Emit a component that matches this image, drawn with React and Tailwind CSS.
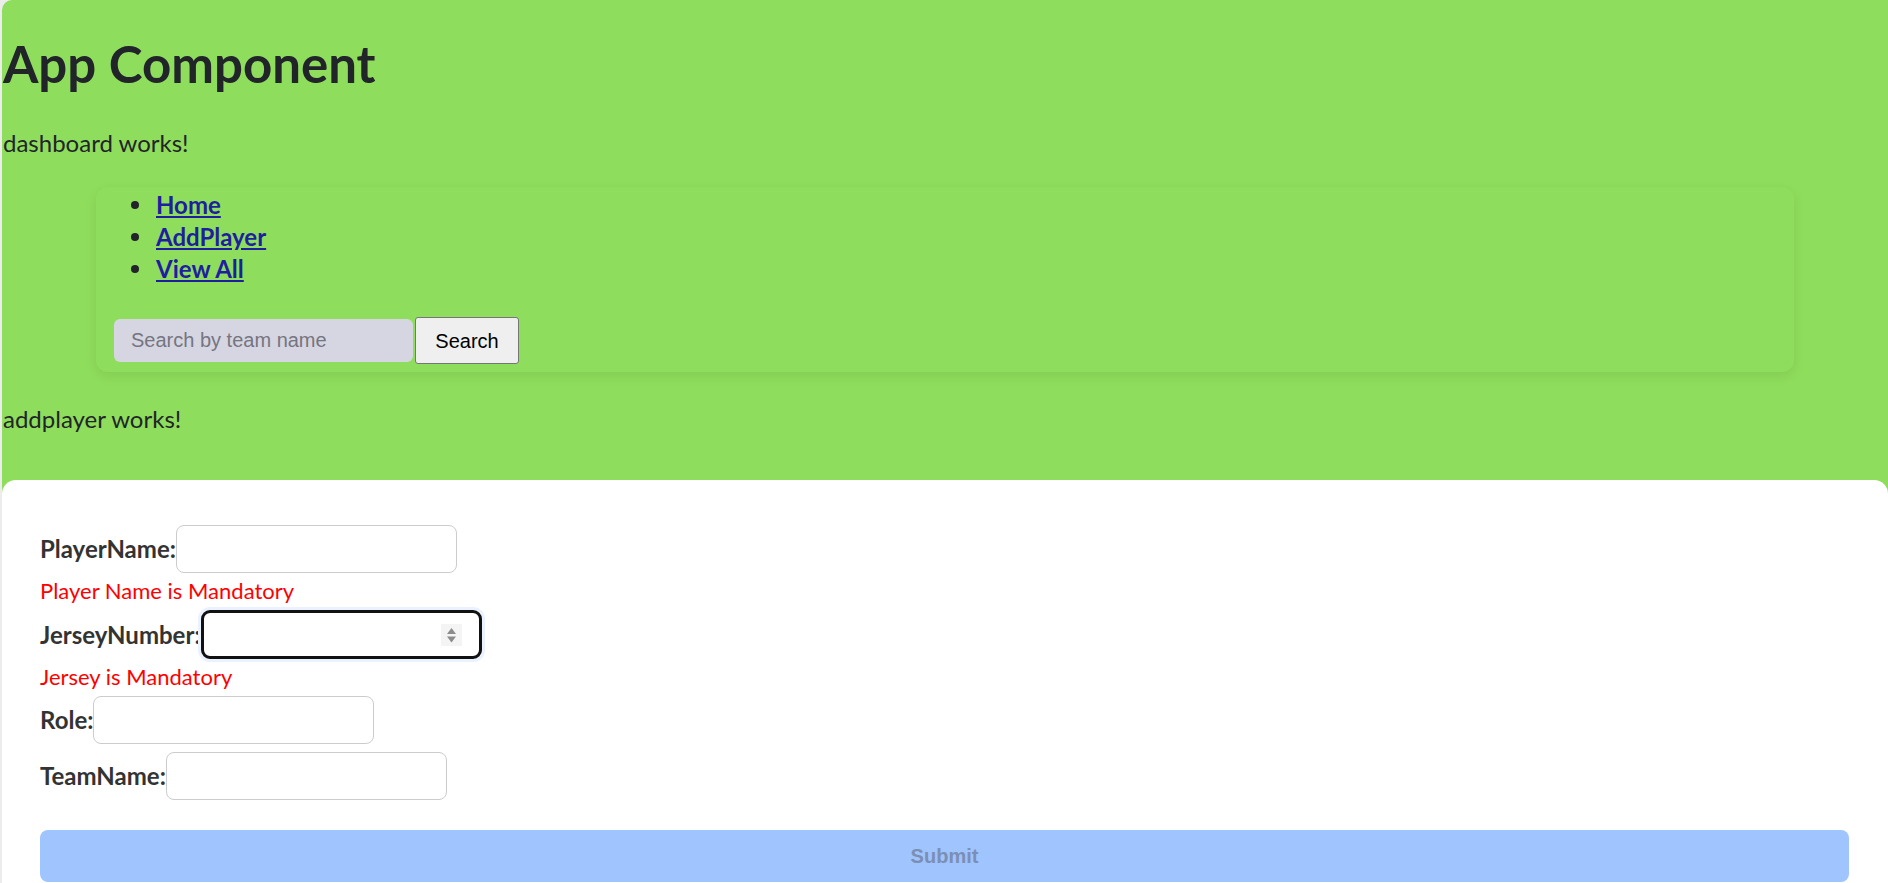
export default function App() {
  const inputCls = "w-[281px] h-[48px] border border-[#cccccc] rounded-[8px] bg-white outline-none";
  const labelCls = "font-bold text-[24px] leading-[30px] text-[#333333]";
  const errCls = "text-[22px] leading-[30px] text-[#ff0000]";
  const links = ["Home", "AddPlayer", "View All"];
  return (
    <div className="w-[1888px] h-[883px] overflow-hidden bg-[#ececec] pl-[2px] font-['Lato','Noto_Sans',sans-serif] text-[#212529]">
      <div className="h-full bg-[#8fdd5c] rounded-tl-[10px] flex flex-col">
        <h1 className="mt-[34px] pl-px text-[51px] leading-[60px] font-bold">App Component</h1>
        <p className="mt-[34px] pl-px text-[24px] leading-[30px]">dashboard works!</p>
        <nav className="mt-[29px] mx-[94px] rounded-[12px] shadow-[0_4px_12px_rgba(0,0,0,0.08)] pt-[2px] px-[18px] pb-[8px]">
          <ul className="list-none pl-[17px] text-[24px] leading-[32px] font-bold">
            {links.map((l) => (
              <li key={l} className="flex items-center">
                <span className="w-[8px] h-[8px] rounded-full bg-[#212529] mr-[17px]" />
                <a href="#" className="underline text-[#1e1ea0]">{l}</a>
              </li>
            ))}
          </ul>
          <div className="mt-[32px] flex items-center">
            <input
              placeholder="Search by team name"
              className="w-[299px] h-[43px] rounded-[6px] bg-[#d5d6e2] pl-[17px] font-['Liberation_Sans',Arial,sans-serif] text-[20px] text-black placeholder:text-[#757580] outline-none"
            />
            <button className="ml-[2px] h-[47px] w-[104px] border border-[#767676] rounded-[3px] bg-[#efefef] font-['Liberation_Sans',Arial,sans-serif] text-[20px] text-black">
              Search
            </button>
          </div>
        </nav>
        <p className="mt-[32px] pl-px text-[24px] leading-[30px]">addplayer works!</p>
        <div className="mt-[46px] flex-1 bg-white rounded-t-[14px] pt-[44px] pl-[38px] pr-[39px]">
          <div className="flex items-center h-[49px]">
            <label className={labelCls}>PlayerName:</label>
            <input className={inputCls} />
          </div>
          <p className={"mt-[3px] " + errCls}>Player Name is Mandatory</p>
          <div className="mt-[4px] flex items-center h-[49px]">
            <label className={labelCls}>JerseyNumber:</label>
            <div className="w-[281px] h-[49px] rounded-[9px] border-[3px] border-[#111111] bg-white shadow-[0_0_0_3px_#eaf2ff] flex items-center justify-end pr-[17px]">
              <svg width="21" height="22" viewBox="0 0 21 22">
                <rect x="0" y="0" width="21" height="22" fill="#f4f4f4" />
                <polygon points="10.5,4 6,10 15,10" fill="#8c8c8c" />
                <polygon points="6,12.5 15,12.5 10.5,18.5" fill="#8c8c8c" />
              </svg>
            </div>
          </div>
          <p className={"mt-[3px] " + errCls}>Jersey is Mandatory</p>
          <div className="mt-[4px] flex items-center h-[48px]">
            <label className={labelCls}>Role:</label>
            <input className={inputCls} />
          </div>
          <div className="mt-[8px] flex items-center h-[48px]">
            <label className={labelCls}>TeamName:</label>
            <input className={inputCls} />
          </div>
          <button className="mt-[30px] w-full h-[52px] rounded-[8px] bg-[#a0c4fd] text-[#7b8fb5] font-bold font-['Liberation_Sans',Arial,sans-serif] text-[20px]">
            Submit
          </button>
        </div>
      </div>
    </div>
  );
}
